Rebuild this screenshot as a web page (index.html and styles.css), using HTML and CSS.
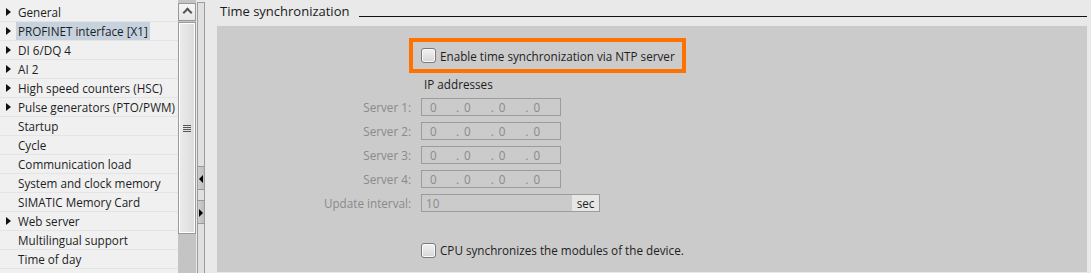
FILE: index.html
```html
<!DOCTYPE html>
<html lang="en">
<head>
    <meta charset="UTF-8">
    <title>Time synchronization</title>
    <link rel="stylesheet" href="styles.css">
</head>
<body>
    <!-- Arbol de navegacion -->
    <ul class="nav">
        <li class="item branch">General</li>
        <li class="item branch"><span class="selected">PROFINET interface [X1]</span></li>
        <li class="item branch">DI 6/DQ 4</li>
        <li class="item branch">AI 2</li>
        <li class="item branch">High speed counters (HSC)</li>
        <li class="item branch">Pulse generators (PTO/PWM)</li>
        <li class="item">Startup</li>
        <li class="item">Cycle</li>
        <li class="item">Communication load</li>
        <li class="item">System and clock memory</li>
        <li class="item">SIMATIC Memory Card</li>
        <li class="item branch">Web server</li>
        <li class="item">Multilingual support</li>
        <li class="item">Time of day</li>
    </ul>

    <div class="scrollbar">
        <div class="scroll-up"></div>
        <div class="scroll-thumb"><span class="grip"></span></div>
    </div>

    <div class="splitter">
        <div class="split-btn left"></div>
        <div class="split-gap"></div>
        <div class="split-btn right"></div>
    </div>

    <!-- Seccion de propiedades -->
    <main class="content">
        <div class="section-title">
            <span>Time synchronization</span>
            <span class="title-line"></span>
        </div>

        <div class="panel">
            <div class="highlight">
                <span class="checkbox"></span>
                <span>Enable time synchronization via NTP server</span>
            </div>

            <div class="subtitle">IP addresses</div>

            <div class="field">
                <span class="label">Server 1:</span>
                <span class="ip"><span class="oct first">0</span><span class="oct">.<i>0</i></span><span class="oct">.<i>0</i></span><span class="oct">.<i>0</i></span></span>
            </div>
            <div class="field">
                <span class="label">Server 2:</span>
                <span class="ip"><span class="oct first">0</span><span class="oct">.<i>0</i></span><span class="oct">.<i>0</i></span><span class="oct">.<i>0</i></span></span>
            </div>
            <div class="field">
                <span class="label">Server 3:</span>
                <span class="ip"><span class="oct first">0</span><span class="oct">.<i>0</i></span><span class="oct">.<i>0</i></span><span class="oct">.<i>0</i></span></span>
            </div>
            <div class="field">
                <span class="label">Server 4:</span>
                <span class="ip"><span class="oct first">0</span><span class="oct">.<i>0</i></span><span class="oct">.<i>0</i></span><span class="oct">.<i>0</i></span></span>
            </div>
            <div class="field">
                <span class="label">Update interval:</span>
                <span class="interval"><span class="value">10</span><span class="unit">sec</span></span>
            </div>

            <div class="check-row">
                <span class="checkbox"></span>
                <span>CPU synchronizes the modules of the device.</span>
            </div>
        </div>
    </main>
</body>
</html>
```

FILE: styles.css
```css
/* Estilos generales */
body {
    margin: 0;
    height: 273px;
    display: flex;
    font-family: "Open Sans", "Liberation Sans", sans-serif;
    font-size: 11.7px;
    color: #1e1e1e;
    background-color: #e9e9e9;
    overflow: hidden;
}

/* Arbol de navegacion */
.nav {
    list-style: none;
    margin: 0;
    padding: 3px 0 0 0;
    width: 178px;
    flex-shrink: 0;
    background-color: #f0f0f0;
}

.item {
    position: relative;
    height: 18px;
    line-height: 18px;
    padding-left: 18px;
    border-bottom: 1px solid #e4e4e4;
    white-space: nowrap;
}

.item.branch::before {
    content: "";
    position: absolute;
    left: 6px;
    top: 5px;
    border-left: 5px solid #111;
    border-top: 4px solid transparent;
    border-bottom: 4px solid transparent;
}

.selected {
    display: inline-block;
    background-color: #c6d2de;
    margin-left: -2px;
    padding: 0 2px;
}

/* Barra de desplazamiento */
.scrollbar {
    width: 18px;
    flex-shrink: 0;
    background-color: #c4c4c4;
    display: flex;
    flex-direction: column;
    padding-top: 3px;
}

.scroll-up {
    height: 16px;
    border: 1px solid #999;
    background: linear-gradient(#f6f6f6, #e6e6e6);
    position: relative;
}

.scroll-up::before {
    content: "";
    position: absolute;
    left: 5px;
    top: 5px;
    width: 5px;
    height: 5px;
    border-left: 2px solid #555;
    border-top: 2px solid #555;
    transform: rotate(45deg);
}

.scroll-thumb {
    margin-top: 1px;
    height: 210px;
    border: 1px solid #9a9a9a;
    box-shadow: inset 1px 1px 0 #fff, inset -1px -1px 0 #fff;
    background: linear-gradient(to right, #ececec, #dcdcdc);
    display: flex;
    align-items: center;
    justify-content: center;
}

.grip {
    width: 8px;
    height: 7px;
    background: repeating-linear-gradient(#555 0 1px, transparent 1px 2px);
}

/* Separador */
.splitter {
    width: 6px;
    flex-shrink: 0;
    margin: 2px 0 0 1px;
    border: 1px solid #9c9c9c;
    border-bottom: none;
    background-color: #e0e0e0;
    display: flex;
    flex-direction: column;
    padding-top: 163px;
}

.split-btn {
    height: 22px;
    border-top: 1px solid #999;
    border-bottom: 1px solid #999;
    background: linear-gradient(to right, #cfcfcf, #bdbdbd);
    position: relative;
}

.split-btn::before {
    content: "";
    position: absolute;
    top: 8px;
    border-top: 4px solid transparent;
    border-bottom: 4px solid transparent;
}

.split-btn.left::before {
    left: 1px;
    border-right: 4px solid #000;
}

.split-btn.right::before {
    left: 1px;
    border-left: 4px solid #000;
}

.split-gap {
    height: 10px;
}

/* Contenido */
.content {
    flex: 1;
    display: flex;
    flex-direction: column;
    padding-right: 4px;
}

.section-title {
    height: 26px;
    display: flex;
    align-items: flex-start;
    gap: 10px;
    padding-left: 15px;
    font-size: 13px;
    color: #1a1a1a;
}

.section-title span:first-child {
    line-height: 20px;
    margin-top: 1px;
}

.title-line {
    flex: 1;
    height: 16px;
    border-bottom: 1px solid #111;
}

.panel {
    margin-left: 12px;
    height: 246px;
    background-color: #cbcbcb;
    padding: 12px 0 0 204px;
    box-sizing: border-box;
}

.highlight {
    margin-left: -12px;
    width: 261px;
    height: 27px;
    border: 4px solid #ff7200;
    display: flex;
    align-items: center;
    gap: 4px;
    padding-left: 8px;
    white-space: nowrap;
}

.checkbox {
    flex-shrink: 0;
    width: 13px;
    height: 13px;
    border: 1px solid #7a7a7a;
    border-radius: 3px;
    background: linear-gradient(#f2f2f2, #d6d6d6);
    box-shadow: inset 0 0 0 1px #fafafa;
}

.subtitle {
    margin: 3px 0 6px 3px;
    line-height: 16px;
}

.field {
    display: flex;
    gap: 10px;
    margin-left: -104px;
    margin-bottom: 6px;
    color: #8a8a8a;
}

.label {
    width: 94px;
    text-align: right;
    line-height: 18px;
    white-space: nowrap;
}

.ip {
    width: 130px;
    height: 16px;
    border: 1px solid #9c9c9c;
    display: flex;
    line-height: 16px;
    padding-left: 8px;
}

.oct {
    width: 36px;
}

.oct.first {
    width: 27px;
}

.oct i {
    font-style: normal;
    margin-left: 5px;
}

.interval {
    width: 177px;
    height: 16px;
    border: 1px solid #9c9c9c;
    display: flex;
    line-height: 16px;
}

.value {
    flex: 1;
    padding-left: 4px;
}

.unit {
    width: 27px;
    background-color: #e6e6e6;
    color: #1e1e1e;
    text-align: center;
}

.check-row {
    margin-top: 30px;
    display: flex;
    align-items: center;
    gap: 4px;
}
```
